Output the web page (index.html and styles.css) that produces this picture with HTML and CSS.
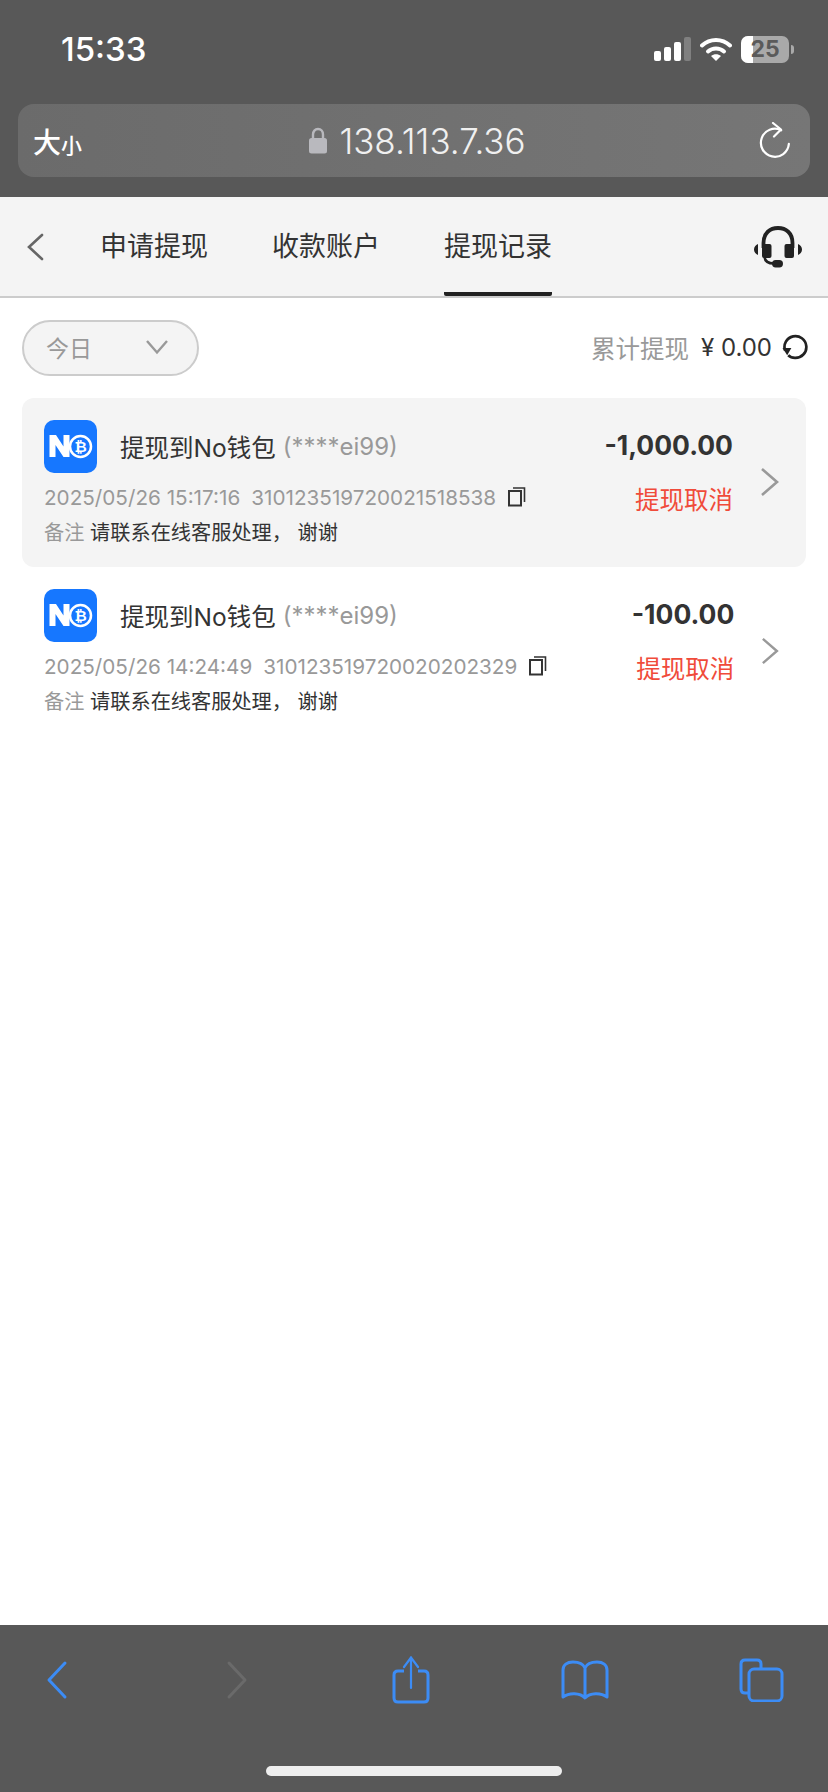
FILE: index.html
```html
<!DOCTYPE html>
<html lang="zh-CN">
<head>
  <meta charset="UTF-8">
  <meta name="viewport" content="width=device-width, initial-scale=1.0">
  <title>提现记录</title>
  <link rel="stylesheet" href="styles.css">
</head>
<body>
  <div class="phone">
    <header class="browser-top">
      <div class="status-bar">
        <span class="clock">15:33</span>
        <div class="status-icons">
          <svg class="signal" width="37" height="24" viewBox="0 0 37 24">
            <rect x="0" y="14" width="7" height="10" rx="2" fill="#fff"/>
            <rect x="10" y="10" width="7" height="14" rx="2" fill="#fff"/>
            <rect x="20" y="5" width="7" height="19" rx="2" fill="#fff"/>
            <rect x="30" y="0" width="7" height="24" rx="2" fill="#808080"/>
          </svg>
          <svg class="wifi" width="32" height="26" viewBox="0 0 32 26">
            <path d="M2 9.500C10 2 22 2 30 9.500" fill="none" stroke="#fff" stroke-width="4" stroke-linecap="round"/>
            <path d="M8 15.500C12.500 11.500 19.500 11.500 24 15.500" fill="none" stroke="#fff" stroke-width="4" stroke-linecap="round"/>
            <path d="M11 20L16 25L21 20C18 17.500 14 17.500 11 20Z" fill="#fff"/>
          </svg>
          <div class="battery">
            <div class="battery-body"><span class="battery-level"></span><span class="battery-num">25</span></div>
            <span class="battery-cap"></span>
          </div>
        </div>
      </div>
      <div class="address-bar">
        <span class="aa"><span class="aa-big">大</span><span class="aa-small">小</span></span>
        <div class="url">
          <svg width="18" height="27" viewBox="0 0 18 27">
            <path d="M4 12V7.500C4 4.500 6 2 9 2C12 2 14 4.500 14 7.500V12" fill="none" stroke="#b9b9be" stroke-width="2.400"/>
            <rect x="0" y="11" width="18" height="15.500" rx="2.500" fill="#b9b9be"/>
          </svg>
          <span>138.113.7.36</span>
        </div>
        <svg class="reload" width="32" height="36" viewBox="0 0 32 36">
          <path d="M20.500 7.500A14 14 0 1 0 30 20" fill="none" stroke="#fff" stroke-width="2.200" stroke-linecap="round" transform="rotate(8 16 20)"/>
          <path d="M14 1L22 7.500L15 14.500" fill="none" stroke="#fff" stroke-width="2.200" stroke-linecap="round" stroke-linejoin="round"/>
        </svg>
      </div>
    </header>

    <nav class="tabs">
      <svg class="tab-back" width="18" height="28" viewBox="0 0 18 28">
        <path d="M16 2L3 14L16 26" fill="none" stroke="#666" stroke-width="2.600" stroke-linecap="round"/>
      </svg>
      <a class="tab">申请提现</a>
      <a class="tab">收款账户</a>
      <a class="tab active">提现记录</a>
      <svg class="headset" width="48" height="42" viewBox="0 0 48 42">
        <path d="M9.500 22V17C9.500 7 16 2 24 2C32 2 38.500 7 38.500 17V22" fill="none" stroke="#222" stroke-width="3.800"/>
        <rect x="8" y="18" width="9.500" height="14" rx="2" fill="#222"/>
        <rect x="30.500" y="18" width="9.500" height="14" rx="2" fill="#222"/>
        <path d="M4 18V29C1.500 28 0 26 0 23.500C0 21 1.500 19 4 18Z" fill="#222"/>
        <path d="M44 18V29C46.500 28 48 26 48 23.500C48 21 46.500 19 44 18Z" fill="#222"/>
        <path d="M10.500 31C11 35.500 14 37.500 20 37.500" fill="none" stroke="#222" stroke-width="2.500"/>
        <rect x="18" y="34" width="11" height="7.500" rx="3.700" fill="#222"/>
      </svg>
    </nav>

    <main class="content">
      <div class="filter-row">
        <div class="date-select">
          <span>今日</span>
          <svg width="24" height="16" viewBox="0 0 24 16">
            <path d="M2 2L12 13.500L22 2" fill="none" stroke="#999" stroke-width="2.400"/>
          </svg>
        </div>
        <div class="total">
          <span class="total-label">累计提现</span>
          <span class="total-value">¥ 0.00</span>
          <svg width="26" height="26" viewBox="0 0 25 25">
            <path d="M3 16A10.500 10.500 0 1 1 12.500 23C9.500 23 7.500 22 6 20.500" fill="none" stroke="#222" stroke-width="2.600"/>
            <path d="M0.500 13.500H9L5 20.500Z" fill="#222"/>
          </svg>
        </div>
      </div>

      <ul class="record-list">
        <li class="record highlighted">
          <div class="record-main">
            <div class="record-title">
              <svg class="wallet-logo" width="53" height="53" viewBox="0 0 53 53">
                <rect width="53" height="53" rx="10" fill="#1677ff"/>
                <path d="M5.500 37V15H12L19.500 26.500V15H25.500V37H19.500L11.500 25V37Z" fill="#fff"/>
                <circle cx="36.500" cy="26.500" r="10.500" fill="none" stroke="#fff" stroke-width="2.500"/>
                <text x="36.500" y="31.500" text-anchor="middle" class="logo-coin">₿</text>
              </svg>
              <span class="wallet-name">提现到No钱包</span>
              <span class="wallet-account">(****ei99)</span>
            </div>
            <div class="record-meta">
              <span>2025/05/26 15:17:16</span>
              <span class="order-no">310123519720021518538</span>
              <svg class="copy" width="18" height="20" viewBox="0 0 18 20">
                <rect x="1" y="4" width="12" height="14.500" fill="none" stroke="#333" stroke-width="2"/>
                <path d="M5 1H16.500V15" fill="none" stroke="#333" stroke-width="1.600"/>
              </svg>
            </div>
            <div class="record-note"><span class="note-label">备注</span> 请联系在线客服处理， 谢谢</div>
          </div>
          <div class="record-side">
            <div class="amount">-1,000.00</div>
            <div class="state">提现取消</div>
          </div>
          <svg class="row-arrow" width="20" height="30" viewBox="0 0 20 30">
            <path d="M2 2L17 15L2 28" fill="none" stroke="#999" stroke-width="2.600"/>
          </svg>
        </li>
        <li class="record">
          <div class="record-main">
            <div class="record-title">
              <svg class="wallet-logo" width="53" height="53" viewBox="0 0 53 53">
                <rect width="53" height="53" rx="10" fill="#1677ff"/>
                <path d="M5.500 37V15H12L19.500 26.500V15H25.500V37H19.500L11.500 25V37Z" fill="#fff"/>
                <circle cx="36.500" cy="26.500" r="10.500" fill="none" stroke="#fff" stroke-width="2.500"/>
                <text x="36.500" y="31.500" text-anchor="middle" class="logo-coin">₿</text>
              </svg>
              <span class="wallet-name">提现到No钱包</span>
              <span class="wallet-account">(****ei99)</span>
            </div>
            <div class="record-meta">
              <span>2025/05/26 14:24:49</span>
              <span class="order-no">310123519720020202329</span>
              <svg class="copy" width="18" height="20" viewBox="0 0 18 20">
                <rect x="1" y="4" width="12" height="14.500" fill="none" stroke="#333" stroke-width="2"/>
                <path d="M5 1H16.500V15" fill="none" stroke="#333" stroke-width="1.600"/>
              </svg>
            </div>
            <div class="record-note"><span class="note-label">备注</span> 请联系在线客服处理， 谢谢</div>
          </div>
          <div class="record-side">
            <div class="amount">-100.00</div>
            <div class="state">提现取消</div>
          </div>
          <svg class="row-arrow" width="20" height="30" viewBox="0 0 20 30">
            <path d="M2 2L17 15L2 28" fill="none" stroke="#999" stroke-width="2.600"/>
          </svg>
        </li>
      </ul>
    </main>

    <footer class="browser-bottom">
      <div class="toolbar">
        <svg width="22" height="40" viewBox="0 0 22 40">
          <path d="M19 3L3 20L19 37" fill="none" stroke="#3c8cf5" stroke-width="3" stroke-linecap="round" stroke-linejoin="round"/>
        </svg>
        <svg class="tool-forward" width="22" height="40" viewBox="0 0 22 40">
          <path d="M3 3L19 20L3 37" fill="none" stroke="#6a6a6a" stroke-width="3" stroke-linecap="round" stroke-linejoin="round"/>
        </svg>
        <svg class="tool-share" width="38" height="48" viewBox="0 0 38 48">
          <path d="M12 15H6C3.500 15 2 16.500 2 19V42C2 44.500 3.500 46 6 46H32C34.500 46 36 44.500 36 42V19C36 16.500 34.500 15 32 15H26" fill="none" stroke="#3c8cf5" stroke-width="3"/>
          <path d="M19 32V2M12 11L19 1.500L26 11" fill="none" stroke="#3c8cf5" stroke-width="2.200" stroke-linecap="round"/>
        </svg>
        <svg width="48" height="40" viewBox="0 0 48 40">
          <path d="M24 8C22 3.500 17 2 12 2C6 2 2 5 2 10V37C8 32.500 19 32.500 24 38C29 32.500 40 32.500 46 37V10C46 5 42 2 36 2C31 2 26 3.500 24 8V38" fill="none" stroke="#3c8cf5" stroke-width="3" stroke-linejoin="round"/>
        </svg>
        <svg width="45" height="44" viewBox="0 0 45 44">
          <path d="M9 35H6C3 35 2 33.500 2 31V6C2 3.500 3.500 2 6 2H18C20.500 2 22 3.500 22 6V11" fill="none" stroke="#3c8cf5" stroke-width="3"/>
          <rect x="10" y="11" width="33" height="32" rx="5" fill="none" stroke="#3c8cf5" stroke-width="3"/>
        </svg>
      </div>
      <div class="home-bar"></div>
    </footer>
  </div>
</body>
</html>
```

FILE: styles.css
```css
* {
  box-sizing: border-box;
}
html, body {
  margin: 0;
  padding: 0;
}
body {
  font-family: Inter, 'Noto Sans CJK SC', sans-serif;
  background: #fff;
  color: #333;
}
ul {
  list-style: none;
  margin: 0;
  padding: 0;
}
.phone {
  width: 828px;
  height: 1792px;
  display: flex;
  flex-direction: column;
  overflow: hidden;
}

/* browser chrome, top */
.browser-top {
  height: 197px;
  background: #585858;
  padding: 0 18px;
  flex-shrink: 0;
}
.status-bar {
  height: 104px;
  display: flex;
  justify-content: space-between;
  align-items: center;
  padding: 0 16px 6px 43px;
}
.clock {
  font-size: 33px;
  font-weight: 500;
  color: #fff;
}
.status-icons {
  display: flex;
  align-items: center;
  gap: 9px;
}
.battery {
  display: flex;
  align-items: center;
  gap: 2px;
}
.battery-body {
  position: relative;
  width: 48px;
  height: 27px;
  border-radius: 7px;
  background: #a9a9a9;
  overflow: hidden;
  text-align: center;
}
.battery-level {
  position: absolute;
  left: 0;
  top: 0;
  bottom: 0;
  width: 12px;
  background: #fff;
}
.battery-num {
  position: relative;
  font-size: 23px;
  line-height: 27px;
  font-weight: 700;
  color: #5a5a5a;
}
.battery-cap {
  width: 3px;
  height: 9px;
  border-radius: 0 3px 3px 0;
  background: #a9a9a9;
}
.address-bar {
  height: 73px;
  border-radius: 16px;
  background: linear-gradient(90deg, #6b6b6b, #767676);
  display: flex;
  justify-content: space-between;
  align-items: center;
  padding: 0 19px 0 15px;
}
.aa {
  color: #fff;
  display: flex;
  align-items: baseline;
}
.aa-big {
  font-size: 28px;
  font-weight: 500;
}
.aa-small {
  font-size: 21px;
  font-weight: 500;
}
.url {
  display: flex;
  align-items: center;
  gap: 12px;
  color: #f0f0f0;
  font-size: 35px;
  font-weight: 300;
  margin-right: 6px;
}
.reload {
  margin-top: -2px;
}

/* tabs */
.tabs {
  height: 101px;
  flex-shrink: 0;
  background: #f4f4f4;
  border-bottom: 2px solid #ccc;
  display: flex;
  align-items: stretch;
  padding: 0 26px;
}
.tab-back {
  align-self: center;
  margin-right: 56px;
}
.tab {
  font-size: 27px;
  line-height: 99px;
  color: #333;
  margin-right: 64px;
  border-bottom: 4px solid transparent;
  height: 99px;
}
.tab.active {
  border-bottom-color: #222;
  border-radius: 0 0 2px 2px;
}
.headset {
  align-self: center;
  margin-left: auto;
}

/* filter */
.content {
  flex: 1;
  padding: 22px 22px 0;
}
.filter-row {
  display: flex;
  justify-content: space-between;
  align-items: center;
  height: 56px;
  margin-bottom: 22px;
}
.date-select {
  width: 177px;
  height: 56px;
  border: 2px solid #ccc;
  border-radius: 28px;
  background: #f4f4f4;
  display: flex;
  justify-content: space-between;
  align-items: center;
  padding: 0 28px 3px 22px;
  color: #999;
  font-size: 23px;
}
.total {
  display: flex;
  align-items: center;
  gap: 10px;
  margin: -2px -2px 0 0;
}
.total-label {
  font-size: 24.500px;
  color: #999;
}
.total-value {
  font-size: 24px;
  color: #333;
  margin-left: 2px;
}

/* records */
.record {
  height: 169px;
  border-radius: 12px;
  display: flex;
  align-items: flex-start;
  padding: 22px 26px 0 22px;
}
.record.highlighted {
  background: #f4f4f4;
}
.record-main {
  flex: 1;
}
.record-title {
  display: flex;
  align-items: center;
  height: 53px;
}
.wallet-logo {
  margin-right: 23px;
}
.logo-coin {
  font-family: 'DejaVu Sans', sans-serif;
  font-size: 15px;
  font-weight: 700;
  fill: #fff;
}
.wallet-name {
  font-size: 24.500px;
  color: #333;
}
.wallet-account {
  font-size: 24px;
  color: #999;
  margin-left: 7px;
}
.record-meta {
  display: flex;
  align-items: center;
  font-size: 20.700px;
  color: #999;
  height: 28px;
  margin-top: 10px;
  white-space: nowrap;
}
.order-no {
  margin-left: 11px;
}
.copy {
  margin-left: 12px;
}
.record-note {
  font-size: 20.200px;
  line-height: 28px;
  color: #333;
  margin-top: 8px;
}
.note-label {
  color: #999;
}
.record-side {
  text-align: right;
  width: 200px;
}
.amount {
  font-size: 26.500px;
  font-weight: 700;
  line-height: 50px;
  color: #333;
}
.state {
  font-size: 24.500px;
  line-height: 34px;
  color: #f04b3a;
  margin-top: 13px;
}
.row-arrow {
  margin: 47px 0 0 27px;
}

/* browser chrome, bottom */
.browser-bottom {
  height: 167px;
  flex-shrink: 0;
  background: #585858;
  display: flex;
  flex-direction: column;
  align-items: center;
}
.toolbar {
  align-self: flex-start;
  height: 141px;
  margin-left: -31px;
  display: grid;
  grid-template-columns: repeat(5, 176px);
  grid-template-rows: 110px;
  justify-items: center;
  align-items: center;
}
.tool-forward {
  margin-left: 8px;
}
.tool-share {
  margin-left: 3px;
}
.home-bar {
  width: 296px;
  height: 10px;
  border-radius: 5px;
  background: #eee;
}
```
